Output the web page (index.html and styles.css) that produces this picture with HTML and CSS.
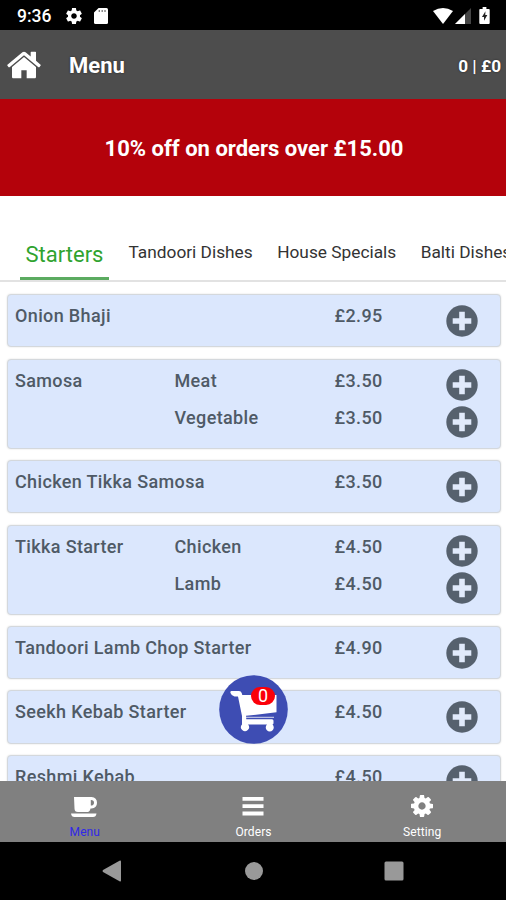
FILE: index.html
```html
<!DOCTYPE html>
<html lang="en">
<head>
<meta charset="utf-8">
<title>Menu</title>
<link rel="stylesheet" href="styles.css">
</head>
<body>
<svg class="defs" width="0" height="0" aria-hidden="true">
  <symbol id="plus" viewBox="0 0 32 32"><circle cx="16" cy="16" r="15.7" fill="#56616e"/><path d="M13.2 6.7h5.6v6.5h6.5v5.6h-6.5v6.5h-5.6v-6.5H6.7v-5.6h6.5z" fill="#e1eafb"/></symbol>
</svg>
<div class="screen">
  <div class="status">
    <span class="clock">9:36</span>
    <svg class="s-gear" viewBox="2 2 20 20"><path fill="#fff" d="M19.43 12.98c.04-.32.07-.64.07-.98s-.03-.66-.07-.98l2.11-1.65c.19-.15.24-.42.12-.64l-2-3.46c-.12-.22-.39-.3-.61-.22l-2.49 1c-.52-.4-1.08-.73-1.69-.98l-.38-2.65C14.46 2.18 14.25 2 14 2h-4c-.25 0-.46.18-.49.42l-.38 2.65c-.61.25-1.17.59-1.69.98l-2.49-1c-.23-.09-.49 0-.61.22l-2 3.46c-.13.22-.07.49.12.64l2.11 1.65c-.04.32-.07.65-.07.98s.03.66.07.98l-2.11 1.65c-.19.15-.24.42-.12.64l2 3.46c.12.22.39.3.61.22l2.49-1c.52.4 1.08.73 1.69.98l.38 2.65c.03.24.24.42.49.42h4c.25 0 .46-.18.49-.42l.38-2.65c.61-.25 1.17-.59 1.69-.98l2.49 1c.23.09.49 0 .61-.22l2-3.46c.12-.22.07-.49-.12-.64l-2.110-1.650zM12 15.500c-1.930 0-3.500-1.570-3.500-3.500s1.570-3.500 3.500-3.500 3.500 1.570 3.500 3.500-1.570 3.500-3.500 3.500z"/></svg>
    <svg class="s-sd" viewBox="0 0 14 16"><path fill="#fff" d="M4.600 0H12.500Q14 0 14 1.500V14.500Q14 16 12.500 16H1.500Q0 16 0 14.500V4.600z"/><path d="M5.300 2v2M8.200 2v2M11 2v2" stroke="#777" stroke-width="1.300"/></svg>
    <svg class="s-wifi" viewBox="0 0 20 16"><path fill="#fff" d="M0 3Q10-3 20 3L10 16z"/></svg>
    <svg class="s-signal" viewBox="0 0 16 16"><path d="M0 16L16 0V16z" fill="#444"/><path d="M0 16L10 6V16z" fill="#fff"/></svg>
    <svg class="s-battery" viewBox="0 0 11 18"><path fill="#fff" d="M3.500 0h4v2H10q1 0 1 1v14q0 1-1 1H1q-1 0-1-1V3q0-1 1-1h2.500z"/><path d="M6.500 4.500L2.800 10.500H5v4l3.500-6H6.300z" fill="#222"/></svg>
  </div>
  <header class="appbar">
    <svg class="home" viewBox="80 253 1632 1283"><path fill="#fff" d="M1472 992v480q0 26-19 45t-45 19h-384v-384h-256v384h-384q-26 0-45-19t-19-45v-480q0-1 .5-3t.5-3l575-474 575 474q1 2 1 6zm223-69l-62 74q-8 9-21 11h-3q-13 0-21-7l-692-577-692 577q-12 8-24 7-13-2-21-11l-62-74q-8-10-7-23.500t11-21.500l719-599q32-26 76-26t76 26l244 204v-195q0-14 9-23t23-9h192q14 0 23 9t9 23v408l219 182q10 8 11 21.500t-7 23.500z"/></svg>
    <h1 class="title">Menu</h1>
    <span class="basket">0 | £0</span>
  </header>
  <div class="banner"><span>10% off on orders over £15.00</span></div>
  <nav class="tabs">
    <span class="tab active">Starters</span>
    <span class="tab">Tandoori Dishes</span>
    <span class="tab">House Specials</span>
    <span class="tab">Balti Dishes</span>
  </nav>
  <main class="list">
    <section class="card">
      <div class="row"><span class="name">Onion Bhaji</span><span class="price">£2.95</span><svg class="add"><use href="#plus"/></svg></div>
    </section>
    <section class="card">
      <div class="row"><span class="name">Samosa</span><span class="option">Meat</span><span class="price">£3.50</span><svg class="add"><use href="#plus"/></svg></div>
      <div class="row"><span class="option">Vegetable</span><span class="price">£3.50</span><svg class="add"><use href="#plus"/></svg></div>
    </section>
    <section class="card">
      <div class="row"><span class="name">Chicken Tikka Samosa</span><span class="price">£3.50</span><svg class="add"><use href="#plus"/></svg></div>
    </section>
    <section class="card">
      <div class="row"><span class="name">Tikka Starter</span><span class="option">Chicken</span><span class="price">£4.50</span><svg class="add"><use href="#plus"/></svg></div>
      <div class="row"><span class="option">Lamb</span><span class="price">£4.50</span><svg class="add"><use href="#plus"/></svg></div>
    </section>
    <section class="card">
      <div class="row"><span class="name">Tandoori Lamb Chop Starter</span><span class="price">£4.90</span><svg class="add"><use href="#plus"/></svg></div>
    </section>
    <section class="card">
      <div class="row"><span class="name">Seekh Kebab Starter</span><span class="price">£4.50</span><svg class="add"><use href="#plus"/></svg></div>
    </section>
    <section class="card">
      <div class="row"><span class="name">Reshmi Kebab</span><span class="price">£4.50</span><svg class="add"><use href="#plus"/></svg></div>
    </section>
  </main>
  <div class="cart">
    <svg viewBox="0 0 69 69"><circle cx="34.500" cy="34.500" r="34.300" fill="#3e4db3"/><path fill="#fff" d="M12.500 16H20q2 0 2.700 2l.6 2H57.500V37.300L27 40.800l.3 3.500H53q1.500 0 1.500 1.500v2.500q0 1-1 1.200a4 4 0 1 1-5.500 0H29a4 4 0 1 1-6 0V41L19 21.500H15.500q-3-.5-4-3.500-.5-2 1-2z"/><path d="M26 42.300h29" stroke="#fff" stroke-width=".8"/></svg>
    <span class="count">0</span>
  </div>
  <footer class="bottombar">
    <div class="item current"><svg viewBox="0 0 26 21"><path fill="#fff" fill-rule="evenodd" d="M3 0H20.500Q26 .5 26 5.700T20.500 11.400H19.500Q19 15 15.500 15H7Q3.500 15 3.500 11.500zM19.800 3v5.500Q23 8.500 23 5.700T19.800 3zM0 16.500H25.500Q25 20 22 20H3.500Q.5 20 0 16.500z"/></svg><span>Menu</span></div>
    <div class="item"><svg viewBox="0 0 26 21"><path fill="#fff" d="M2.500 0h21v3.800h-21zM2.500 7.300h21v3.800h-21zM2.500 14.600h21v3.800h-21z"/></svg><span>Orders</span></div>
    <div class="item"><svg class="cog" viewBox="0 128 1536 1536"><path fill="#fff" d="M1024 896q0-106-75-181t-181-75-181 75-75 181 75 181 181 75 181-75 75-181zm512-109v222q0 12-8 23t-20 13l-185 28q-19 54-39 91 35 50 107 138 10 12 10 25t-9 23q-27 37-99 108t-94 71q-12 0-26-9l-138-108q-44 23-91 38-16 136-29 186-7 28-36 28h-222q-14 0-24.500-8.500t-11.500-21.500l-28-184q-49-16-90-37l-141 107q-10 9-25 9-14 0-25-11-126-114-165-168-7-10-7-23 0-12 8-23 15-21 51-66.500t54-70.500q-27-50-41-99l-183-27q-13-2-21-12.500t-8-23.500v-222q0-12 8-23t19-13l186-28q14-46 39-92-40-57-107-138-10-12-10-24 0-10 9-23 26-36 98.500-107.500t94.500-71.500q13 0 26 10l138 107q44-23 91-38 16-136 29-186 7-28 36-28h222q14 0 24.500 8.500t11.500 21.500l28 184q49 16 90 37l142-107q9-9 24-9 13 0 25 10 129 119 165 170 7 8 7 22 0 12-8 23-15 21-51 66.500t-54 70.500q26 50 41 98l183 28q13 2 21 12.500t8 23.500z"/></svg><span>Setting</span></div>
  </footer>
  <div class="sysnav">
    <svg viewBox="0 0 22 22"><path fill="#999" d="M19 1.500V20.500Q19 22 17.500 21.300L1 12Q0 11 1 10L17.500.7Q19 0 19 1.500z"/></svg>
    <svg viewBox="0 0 22 22"><circle cx="11" cy="11" r="9" fill="#999"/></svg>
    <svg viewBox="0 0 22 22"><rect x="1.500" y="1.500" width="19" height="19" rx="1.500" fill="#999"/></svg>
  </div>
</div>
</body>
</html>
```
FILE: styles.css
```css
* { box-sizing: border-box; }
body { margin: 0; background: #fff; font-family: Roboto, "Liberation Sans", sans-serif; }
svg { display: block; flex: none; }
.defs { position: absolute; }
.screen { position: relative; width: 506px; height: 900px; overflow: hidden; display: flex; flex-direction: column; }

.status { flex: none; height: 30px; background: #000; display: flex; align-items: center; padding: 1px 16px 0 17px; }
.clock { width: 49px; color: #fff; font-size: 17.5px; font-weight: 500; line-height: 30px; white-space: nowrap; }
.s-gear { width: 16px; height: 16px; }
.s-sd { width: 14px; height: 16px; margin-left: 12px; }
.s-wifi { width: 20px; height: 16px; margin-left: auto; }
.s-signal { width: 16px; height: 16px; margin-left: 2px; }
.s-battery { width: 11px; height: 17px; margin-left: 8px; }

.appbar { flex: none; height: 68.5px; background: #4d4d4d; color: #fff; display: flex; align-items: center; padding: 4px 5px 0 7px; text-shadow: 0 0 2px #222; }
.home { width: 34px; height: 28px; margin-top: -3px; }
.title { margin: 0 auto 0 28px; font-size: 22px; line-height: 28px; font-weight: 700; }
.basket { font-size: 17.2px; font-weight: 700; line-height: 28px; white-space: nowrap; }

.banner { flex: none; height: 97px; background: #b4020b; color: #fff; display: flex; align-items: center; justify-content: center; padding: 2px 0 0 2px; font-size: 22px; font-weight: 700; white-space: nowrap; }

.tabs { flex: none; height: 86.5px; display: flex; align-items: flex-end; padding-left: 20px; border-bottom: 2px solid #e2e2e2; font-size: 17.3px; color: #333; white-space: nowrap; }
.tab { flex: none; line-height: 24px; padding-bottom: 16px; margin-left: 24.500px; }
.tab.active { width: 89px; height: 42px; margin: 0 -5px 0 0; padding: 5px 0 0; border-bottom: 3px solid #5bab60; text-align: center; font-size: 22px; color: #2fa32f; }

.list { flex: none; height: 499px; overflow: hidden; padding: 12.300px 5px 0 7px; display: flex; flex-direction: column; gap: 11.100px; }
.card { flex: none; background: #dbe7fd; border: 1px solid #d4d8dc; border-radius: 4px; box-shadow: 0 0 2px #ddd; padding: 2px 0 11.800px 7px; }
.row { height: 37.400px; display: grid; grid-template-columns: 159.500px 160px 111.500px 32px; }
.row span { line-height: 37px; font-size: 18px; font-weight: 500; letter-spacing: .36px; color: #4f5a66; white-space: nowrap; }
.row .name { grid-column: 1; grid-row: 1; }
.row .option { grid-column: 2; grid-row: 1; }
.row .price { grid-column: 3; grid-row: 1; }
.row .add { grid-column: 4; grid-row: 1; width: 32px; height: 32px; margin-top: 7.500px; }

.cart { position: absolute; left: 219px; top: 675px; width: 69px; height: 69px; }
.cart svg { width: 69px; height: 69px; }
.count { position: absolute; left: 32px; top: 12px; width: 24px; height: 18px; border-radius: 9px; background: #fb0009; color: #fff; font-size: 18px; line-height: 18px; text-align: center; }

.bottombar { flex: none; height: 61px; background: #808080; color: #fff; display: grid; grid-template-columns: repeat(3, 1fr); }
.item { display: flex; flex-direction: column; align-items: center; padding-top: 16px; font-size: 12px; }
.item svg { width: 26px; height: 21px; }
.item svg.cog { width: 22px; height: 22px; margin: -2px 0 1px; }
.item span { line-height: 16px; margin: 6px 0 0 1px; letter-spacing: .1px; }
.item.current span { color: #3028e8; }

.sysnav { flex: none; height: 58px; background: #000; display: flex; justify-content: space-between; align-items: center; padding: 0 101px 0 102px; }
.sysnav svg { width: 22px; height: 22px; }
```
